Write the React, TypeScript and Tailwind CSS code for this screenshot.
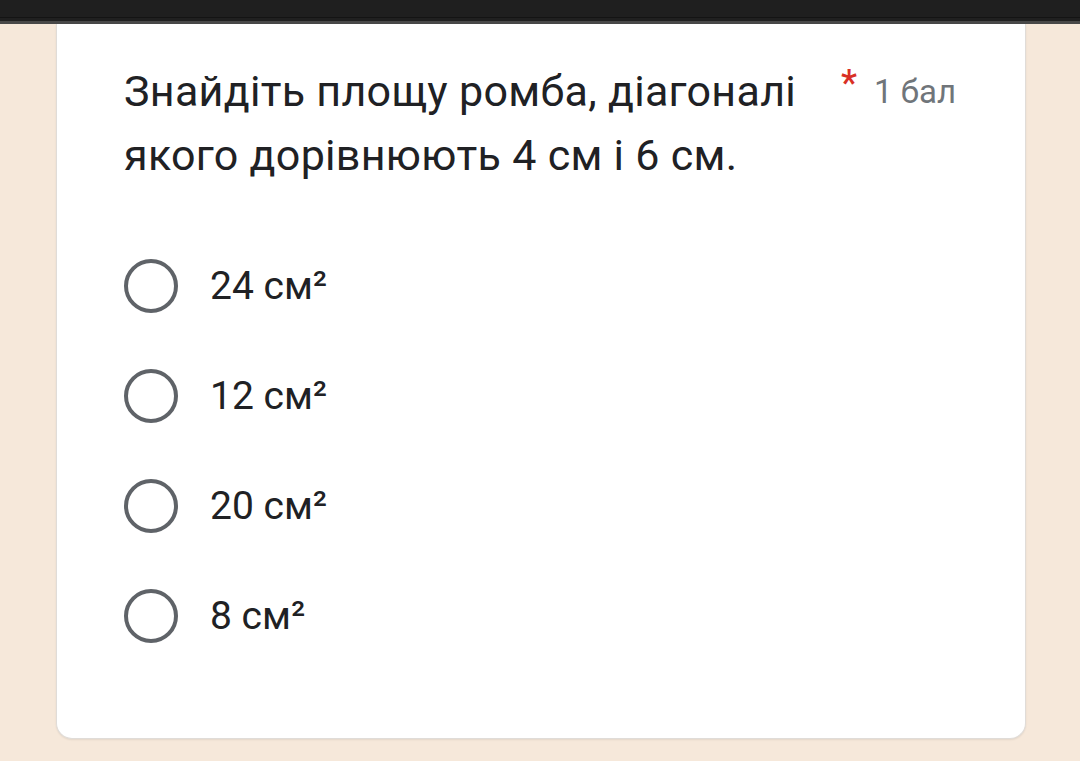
import React from "react";

const options = ["24 см²", "12 см²", "20 см²", "8 см²"];

export default function App() {
  return (
    <div
      className="w-[1080px] h-[761px] bg-[#f6e8da] flex flex-col overflow-hidden"
      style={{ fontFamily: "Roboto, 'Noto Sans', sans-serif" }}
    >
      <div className="h-[17px] bg-[#1f1f1f] shrink-0" />
      <div className="h-[1px] bg-[#141414] shrink-0" />
      <div className="h-[3px] bg-[#202020] shrink-0" />
      <div className="h-[3px] bg-[#484848] shrink-0" />
      <div className="px-[56px] shrink-0">
        <div className="w-[970px] h-[715px] bg-white rounded-b-[16px] border-x border-b border-[#e0dcd8] shadow-[0_1px_2px_rgba(0,0,0,0.08)] pt-[35px] pl-[67px] pr-[69px]">
          <div className="flex items-start">
            <div className="flex-1 text-[43px] leading-[64px] tracking-[0.3px] text-[#202124] pr-[30px]">
              Знайдіть площу ромба, діагоналі якого дорівнюють 4 см і 6 см.
            </div>
            <div className="flex items-start shrink-0">
              <span className="text-[#d93025] text-[36px] leading-[40px] mr-[17px] mt-[4px] font-medium">*</span>
              <span className="text-[#70757a] text-[33px] leading-[40px] mt-[13px]">1 бал</span>
            </div>
          </div>
          <div className="mt-[72px] flex flex-col gap-[56px]">
            {options.map((o) => (
              <div key={o} className="flex items-center h-[54px]">
                <div className="w-[54px] h-[54px] rounded-full border-[4px] border-[#5f6368] shrink-0" />
                <span className="ml-[32px] text-[39px] text-[#202124]">{o}</span>
              </div>
            ))}
          </div>
        </div>
      </div>
    </div>
  );
}
